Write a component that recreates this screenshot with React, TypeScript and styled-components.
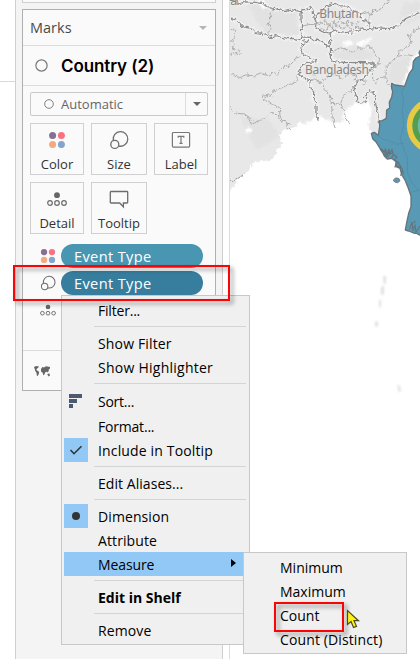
import React from "react";
import styled, { createGlobalStyle } from "styled-components";

const GlobalStyle = createGlobalStyle`
  * { box-sizing: border-box; }
  body { margin: 0; background: #fff; overflow: hidden; }
`;

const Page = styled.div`
  position: relative;
  display: flex;
  width: 420px;
  height: 659px;
  overflow: hidden;
  background: #fff;
  font-family: "Open Sans", "Noto Sans", sans-serif;
  color: #333;
`;
const Gutter = styled.div`
  flex: none;
  width: 15px;
  height: 82px;
  border-bottom: 1px solid #d9d9d9;
`;
const Sidebar = styled.aside`
  flex: none;
  display: flex;
  flex-direction: column;
  gap: 6px;
  width: 208px;
  padding: 0 6px;
  background: #f4f4f4;
  border-left: 1px solid #d0d0d0;
  border-right: 1px solid #d0d0d0;
`;
const PreviousCard = styled.div`
  height: 3px;
  background: #fafafa;
  border: 1px solid #d0d0d0;
  border-top: 0;
`;
const Card = styled.section`
  display: flex;
  flex-direction: column;
  height: 382px;
  background: #fafafa;
  border: 1px solid #b0b0b0;
`;
const CardHeader = styled.header`
  display: flex;
  align-items: center;
  justify-content: space-between;
  height: 36px;
  padding: 0 8px 0 7px;
  border-bottom: 1px solid #dcdcdc;
  font: 400 14.5px "Open Sans", sans-serif;
  color: #4a4a4a;
`;
const LayerTitle = styled.div`
  display: flex;
  align-items: center;
  gap: 13px;
  height: 40px;
  padding-left: 12px;
  border-bottom: 1px solid #dcdcdc;
  font: 600 17px Inter, sans-serif;
  letter-spacing: -0.1px;
  color: #000;
`;
const Caret = styled.span<{ $color: string; $size: number }>`
  border: ${(p) => p.$size}px solid transparent;
  border-top: ${(p) => p.$size}px solid ${(p) => p.$color};
  border-bottom: 0;
`;
const MarkType = styled.div`
  display: flex;
  height: 24px;
  margin: 6px 7px 0;
  border: 1px solid #c9c9c9;
  border-radius: 2px;
  font: 400 13px "Open Sans", sans-serif;
  color: #666;
`;
const MarkTypeValue = styled.div`
  flex: 1;
  display: flex;
  align-items: center;
  gap: 7px;
  padding-left: 13px;
`;
const MarkTypeArrow = styled.div`
  display: flex;
  align-items: center;
  justify-content: center;
  width: 22px;
  border-left: 1px solid #dcdcdc;
`;
const ButtonGrid = styled.div`
  display: grid;
  grid-template-columns: 54px 56px 54px;
  grid-auto-rows: 52px;
  column-gap: 7px;
  row-gap: 7px;
  margin: 7px 7px 0;
`;
const MarkButton = styled.button`
  display: flex;
  flex-direction: column;
  align-items: center;
  padding: 6px 0 0;
  background: #fafafa;
  border: 1px solid #d0d0d0;
  font: 400 13px/17px "Open Sans", sans-serif;
  color: #333;
  svg { flex: none; margin-bottom: 6px; }
`;
const Shelf = styled.div`
  display: flex;
  flex-direction: column;
  gap: 3px;
  height: 117px;
  padding: 10px 0 0 16px;
  border-bottom: 1px solid #dcdcdc;
`;
const ShelfRow = styled.div`
  display: flex;
  align-items: center;
  gap: 4px;
  height: 24px;
`;
const Pill = styled.span<{ $active?: boolean }>`
  width: 142px;
  height: 24px;
  padding-left: 13px;
  border-radius: 12px;
  background: ${(p) => (p.$active ? "#377e9e" : "#4996b2")};
  color: #fff;
  font: 500 14.6px/25px "Open Sans", sans-serif;
  letter-spacing: 0.35px;
`;
const CardFooter = styled.div`
  padding: 11px 0 0 10px;
`;
const MapPane = styled.main`
  margin-left: 6px;
  flex: 1;
  border-left: 1px solid #dcdcdc;
`;
const Menu = styled.div<{ $x: number; $y: number; $w: number; $h: number }>`
  position: absolute;
  left: ${(p) => p.$x}px;
  top: ${(p) => p.$y}px;
  width: ${(p) => p.$w}px;
  height: ${(p) => p.$h}px;
  padding: 2px 0 2px 2px;
  background: #f0f0f0;
  border: 1px solid #c8c8c8;
  font: 400 14px "Open Sans", sans-serif;
  color: #000;
`;
const Item = styled.div<{ $selected?: boolean; $bold?: boolean; $tall?: boolean; $spacing?: number }>`
  display: flex;
  align-items: center;
  gap: 10px;
  height: ${(p) => (p.$tall ? 26 : 24)}px;
  font-weight: ${(p) => (p.$bold ? 700 : 400)};
  letter-spacing: ${(p) => p.$spacing ?? 0}px;
  white-space: nowrap;
  background: ${(p) => (p.$selected ? "#91c8f6" : "transparent")};
`;
const Mark = styled.span<{ $on?: boolean }>`
  display: flex;
  align-items: center;
  justify-content: center;
  flex: none;
  width: 24px;
  height: 24px;
  background: ${(p) => (p.$on ? "#91c8f6" : "transparent")};
`;
const Arrow = styled.span`
  margin: -2px 13px 0 auto;
  border: 4px solid transparent;
  border-left: 5px solid #000;
  border-right: 0;
`;
const Separator = styled.hr`
  height: 1px;
  margin: 4px 3px 4px 30px;
  border: 0;
  background: #d4d4d4;
`;
const Highlight = styled.div<{ $x: number; $y: number; $w: number; $h: number }>`
  position: absolute;
  left: ${(p) => p.$x}px;
  top: ${(p) => p.$y}px;
  width: ${(p) => p.$w}px;
  height: ${(p) => p.$h}px;
  border: 2px solid #fa0505;
  filter: drop-shadow(3px 3px 2px rgba(0, 0, 0, 0.42));
`;
const Pointer = styled.svg`
  position: absolute;
  left: 346px;
  top: 609px;
`;

const Ring = ({ size }: { size: number }) => (
  <svg width={size} height={size} viewBox="0 0 12 12" fill="none" stroke="#777" strokeWidth="1.1">
    <circle cx="6" cy="6" r="5.2" />
  </svg>
);
const ColorIcon = ({ small }: { small?: boolean }) => (
  <svg width={small ? 18 : 20} height={small ? 18 : 20} viewBox="0 0 20 20">
    <circle cx="5.6" cy="5.6" r="3.5" fill="#866f96" />
    <circle cx="14.4" cy="5.6" r="3.5" fill="#fa7280" />
    <circle cx="5.6" cy="14.4" r="3.5" fill="#f5a97e" />
    <circle cx="14.4" cy="14.4" r="3.5" fill="#82a5cf" />
  </svg>
);
const SizeIcon = ({ small }: { small?: boolean }) => (
  <svg width={small ? 16 : 20} height={small ? 16 : 20} viewBox="0 0 20 20" fill="none" stroke="#6c6c6c" strokeWidth="1.3">
    <path d="M4.300 10.200A7.300 7.300 0 1 1 10 16.100" />
    <circle cx="5.8" cy="14.4" r="4" />
  </svg>
);
const IconSlot = styled.span`
  display: flex;
  justify-content: center;
  width: 18px;
`;
const LabelIcon = () => (
  <svg width="20" height="20" viewBox="0 0 20 20" fill="none" stroke="#777" strokeWidth="1.2">
    <rect x="1.4" y="2.5" width="17.2" height="14.6" rx="1" />
    <path d="M7.200 7.800V6.300h5.600V7.800M10 6.300v7M8.400 13.300h3.200" />
  </svg>
);
const DetailIcon = ({ small }: { small?: boolean }) => (
  <svg width={small ? 16 : 20} height={small ? 16 : 20} viewBox="0 0 20 20" fill="none" stroke="#6c6c6c" strokeWidth="1.2">
    <circle cx="10" cy="6.2" r="2.9" fill="#666" stroke="none" />
    <circle cx="3" cy="14" r="2.3" />
    <circle cx="10" cy="14" r="2.3" />
    <circle cx="17" cy="14" r="2.3" />
  </svg>
);
const TooltipIcon = () => (
  <svg width="20" height="20" viewBox="0 0 20 20" fill="none" stroke="#6c6c6c" strokeWidth="1.3">
    <path d="M2 2.500h16a.7.7 0 0 1 .7.7V13.300a.7.7 0 0 1-.7.7h-3.600v3.800l-3.700-3.800H2a.7.7 0 0 1-.7-.7V3.200A.7.7 0 0 1 2 2.500Z" />
  </svg>
);
const WorldIcon = () => (
  <svg width="18" height="14" viewBox="0 0 18 14" fill="#666">
    <path d="M1 2l2-1 3 .5-1 1.500-1 .4-.6 1.400 1 1 1.700 1-.2 2L4.700 11l-.8-.2-.4-3-1-1.200L1.700 4z" />
    <path d="M8 4l1.400-2L11 2.500l2-1.200 4 .8v1.500l-1.200.8-.3 2-1.500 1-.7-1-1 .8-.9 2.300-1.100.7-.6-2.500L8 6.500z" />
    <path d="M14.200 9l2.200-.4.6 1.800-1.500 1z" />
  </svg>
);
const SortIcon = () => (
  <svg width="14" height="14" viewBox="0 0 14 14" fill="#4b5a70">
    <path d="M0 0h13v4H0zM0 5h8v4H0zM0 10h4v4H0z" />
  </svg>
);
const CheckIcon = () => (
  <svg width="14" height="12" viewBox="0 0 14 12" fill="none" stroke="#333" strokeWidth="1.6">
    <path d="M1.500 6l3.500 3.700 7.500-7.500" />
  </svg>
);
const DotIcon = () => (
  <svg width="8" height="8" viewBox="0 0 8 8"><circle cx="4" cy="4" r="4" fill="#333" /></svg>
);

const MYANMAR =
  "M604 145L597 158 600 168 588 174 580 184 578 207 568 220 561 239 554 259 525 255 515 250 515 265 518 275 515 292 508 306 509 324 500 330 499 355 487 362 478 363 479 379 475 406 463 397 454 400 458 416 469 427 483 450 495 470 502 477 515 475 528 485 527 499 540 505 545 523 556 542 565 565 573 588 573 620 566 640 560 668 556 690 566 693 580 699 590 700 604 708Z";

const COUNTRY_BORDERS = [
  "M30 51L51 62 69 80 95 85 107 98 128 100 150 113 167 107 181 111 205 116 219 115 239 119 247 108 244 90 248 77 243 60 243 38 247 28 259 29 273 22 279 31 282 51 289 68 286 83 304 92 327 99 348 93 375 98 399 96 422 87 448 89 446 62 425 58 421 38 396 30 381 18 357 17 342 10 323 16 306 33 290 47 281 67",
  "M30 1L48 0 57 12 75 6 107 7 128 11 146 24 170 26 195 35 218 30 242 35",
  "M448 89L477 84 512 86 532 80 555 57 576 47 600 37",
  "M247 111L270 112 281 122 294 120 311 130 327 141 332 118",
  "M332 100L331 170 336 181 372 188 414 187 456 189 467 195 454 206 443 224 430 236 412 244 402 261 407 285 415 305 426 311 437 300 436 286 447 273 457 276 466 285 467 312 474 340 475 370",
  "M246 124L269 119 248 133 240 146 249 163 274 174 288 179 287 186 263 187 250 198 240 203 235 217 245 230 270 242 269 262 281 276 281 299 288 312 288 337 294 358",
];
const STATE_BORDERS = [
  "M163 25L150 40 152 58 144 73 151 84 143 99 151 106",
  "M246 79L266 73 285 74M285 77L299 66 310 72 317 62 325 76 340 60 347 77 358 62 374 72 389 60 397 73 415 67 426 60 445 68",
  "M302 69L301 84 321 91 327 76 343 91 356 78 372 90 381 76 397 92 410 79 428 85M355 62L366 51M387 62L376 84M343 60L337 88",
  "M32 87L47 92 40 105 47 115 33 121 42 133 38 145 59 151 64 159 30 163",
  "M30 225L43 224 56 234 80 225 103 228 119 218 144 227 158 219 175 223 190 201 213 194 227 174 245 170",
  "M245 217L232 225 230 242 211 252 184 263 161 274 156 284 133 288 129 297 158 314 178 322 181 358 198 368 202 380 213 389",
  "M30 322L43 339 74 342 86 351 92 370 130 358 151 339 172 345 185 362 211 373",
  "M332 162L342 151 361 143 382 149 395 157 414 143 431 146 444 135 458 147 461 161 480 177 473 194 457 204 458 238 469 250 475 237 496 229",
  "M281 224L294 242 308 253 311 264 331 287 334 311 337 336 340 358 344 383M275 241L319 237 329 220 351 225 371 240 380 219 410 225 405 245 416 237",
  "M334 310L361 312 374 281 392 274 399 261 410 258M358 312L373 331 377 362 390 371",
  "M600 85L581 92 567 111 574 126 558 145 534 155 532 169 518 180 499 199 498 235 503 253 514 260M532 169L563 164 580 168",
  "M421 42L438 35 449 42 459 33 484 28 494 13 509 3M445 60L455 42",
  "M437 286L447 270 456 277M415 249L426 237 437 246 428 255M457 206L470 199",
];

const MapDrawing = () => (
  <svg width="190" height="659" viewBox="30 0 570 1977">
    <defs>
      <filter id="ragged" x="-5%" y="-5%" width="110%" height="110%" colorInterpolationFilters="sRGB">
        <feTurbulence type="fractalNoise" baseFrequency="0.09" numOctaves="2" seed="9" />
        <feDisplacementMap in="SourceGraphic" scale="16" xChannelSelector="R" yChannelSelector="G" />
      </filter>
      <filter id="soft" x="-10%" y="-10%" width="120%" height="120%" colorInterpolationFilters="sRGB">
        <feGaussianBlur stdDeviation="3" />
      </filter>
    </defs>
    <g filter="url(#ragged)">
      <path fill="#e8e8e8" d="M10-20H630V350L480 410 455 403 445 378 440 342 427 332 411 340 399 358 365 369 336 374 308 366 275 383 246 366 226 380 204 390 185 393 180 410 188 430 176 449 153 479 128 485 104 485 92 501 65 527 43 559 10 585Z" />
      <g filter="url(#soft)" fill="#dedede" opacity=".55">
        <path d="M80 10l145 25 15 72-110-12zM340 155l80-15 45 25-30 22-90-5zM515 180l65-12-25 85-50-10zM60 350l90 10 30 50-70 40zM550 10l50-5v50l-70 30z" />
      </g>
      <g filter="url(#soft)" fill="none" stroke="#fafafa" strokeWidth="9">
        {COUNTRY_BORDERS.map((d) => <path key={d} d={d} />)}
      </g>
      <g filter="url(#soft)" fill="#fff">
        <path d="M365 135l20-16 14 8-8 10zM408 130l28-10 23-12-13 20-30 12zM410 308l20 10 14-22 12 28-10 55-80 0 5-45zM110 5l20-6 12 22-12 3zM75 390l12-9 8 10-10 10zM250 372l50-25 40 22 40-6-10 24H245z" />
        <path d="M555 260l50-105-12 0-20 25-10 35-14 30z" />
      </g>
      <g fill="none" stroke="#a8a8a8" strokeWidth="2.800">
        {STATE_BORDERS.map((d) => <path key={d} d={d} />)}
      </g>
      <g fill="none" stroke="#8c8c8c" strokeWidth="3.800">
        {COUNTRY_BORDERS.map((d) => <path key={d} d={d} />)}
      </g>
      <path fill="none" stroke="#999" strokeWidth="3" d="M30 541l15 1 12-9 14-9M286 330l9 34" />
    </g>
    <path d={MYANMAR} fill="#589ab6" stroke="#65747b" strokeWidth="4" strokeLinejoin="round" />
    <path fill="none" stroke="#4c89a5" strokeWidth="2" d="M554 260l-9 15 6 25-4 32 4 47-11 38 9 22 13 35 1 47 13 29 20 20M474 406l12 11 20 5 24 11 22-4M573 577l30-8" />
    <g fill="none" stroke="#65747b" strokeWidth="3.5">
      <path d="M480 447l8 8-4-9 10 12 2-12 5 18 6-17 2 15 7-13 3 12-15-3-11 9 11 2-6-9 15 2M513 476l8-12 10 7-8 8 12 10M524 502l10-16 11 19-18-10M542 528l5-18 4 12M569 688l7-22 3 24 6-14 3 20 12-18M581 670l4-8" />
    </g>
    <path d="M520 540l7-6 9 1 4 7-7 6-9-2z" fill="#589ab6" stroke="#777" strokeWidth="3" />
    <circle cx="645" cy="377" r="76" fill="#67bbb0" stroke="#eac943" strokeWidth="17" />
    <circle cx="645" cy="377" r="60" fill="none" stroke="#579e4c" strokeWidth="16" />
    <g filter="url(#soft)" fill="#dedede">
      <path d="M490 828h8l-1 25-6-2zM484 860l8-2-1 27-8-2zM477 903l7-5-2 22-5 3zM465 967l8-4 1 14-8 5zM532 1155l7 2 4 16-6 4z" />
    </g>
    <g fontFamily='"Noto Sans", sans-serif' fontSize="36" fill="#858585" stroke="#eeeeee" strokeWidth="2" paintOrder="stroke">
      <text x="31" y="15" textLength="25">al</text>
      <text x="298" y="54" textLength="118">Bhutan</text>
      <text x="255" y="222" textLength="192">Bangladesh</text>
    </g>
  </svg>
);

export default function App() {
  return (
    <Page>
      <GlobalStyle />
      <Gutter />
      <Sidebar>
        <PreviousCard />
        <Card>
          <CardHeader>Marks<Caret $color="#b5b5b5" $size={4} /></CardHeader>
          <LayerTitle><Ring size={13} />Country (2)</LayerTitle>
          <MarkType>
            <MarkTypeValue><Ring size={10} />Automatic</MarkTypeValue>
            <MarkTypeArrow><Caret $color="#666" $size={4} /></MarkTypeArrow>
          </MarkType>
          <ButtonGrid>
            <MarkButton><ColorIcon />Color</MarkButton>
            <MarkButton><SizeIcon />Size</MarkButton>
            <MarkButton><LabelIcon />Label</MarkButton>
            <MarkButton><DetailIcon />Detail</MarkButton>
            <MarkButton><TooltipIcon />Tooltip</MarkButton>
          </ButtonGrid>
          <Shelf>
            <ShelfRow><IconSlot><ColorIcon small /></IconSlot><Pill>Event Type</Pill></ShelfRow>
            <ShelfRow><IconSlot><SizeIcon small /></IconSlot><Pill $active>Event Type</Pill></ShelfRow>
            <ShelfRow><IconSlot><DetailIcon small /></IconSlot></ShelfRow>
          </Shelf>
          <CardFooter><WorldIcon /></CardFooter>
        </Card>
      </Sidebar>
      <MapPane><MapDrawing /></MapPane>

      <Menu $x={61} $y={295} $w={189} $h={350}>
        <Item $spacing={-0.2}><Mark />Filter...</Item>
        <Separator />
        <Item $spacing={0.15}><Mark />Show Filter</Item>
        <Item $spacing={0.25}><Mark />Show Highlighter</Item>
        <Separator />
        <Item $tall $spacing={-0.25}><Mark><SortIcon /></Mark>Sort...</Item>
        <Item $spacing={-0.2}><Mark />Format...</Item>
        <Item $spacing={0.15}><Mark $on><CheckIcon /></Mark>Include in Tooltip</Item>
        <Separator />
        <Item $spacing={0.05}><Mark />Edit Aliases...</Item>
        <Separator />
        <Item $spacing={0.1}><Mark $on><DotIcon /></Mark>Dimension</Item>
        <Item $spacing={0.1}><Mark />Attribute</Item>
        <Item $selected $spacing={-0.1}><Mark />Measure<Arrow /></Item>
        <Separator />
        <Item $bold><Mark />Edit in Shelf</Item>
        <Separator />
        <Item $spacing={0.1}><Mark />Remove</Item>
      </Menu>
      <Highlight $x={13} $y={265} $w={217} $h={36} />
      <Menu $x={243} $y={552} $w={164} $h={102}>
        <Item><Mark />Minimum</Item>
        <Item><Mark />Maximum</Item>
        <Item><Mark />Count</Item>
        <Item $spacing={0.12}><Mark />Count (Distinct)</Item>
      </Menu>
      <Highlight $x={274} $y={602} $w={70} $h={30} />
      <Pointer width="15" height="20" viewBox="0 0 15 20">
        <path d="M1.500 1.500v14l3.500-3 2.500 6 3-1.200-2.500-5.600h4.500z" fill="#fff21a" stroke="#4a4a20" strokeWidth="1.200" />
      </Pointer>
    </Page>
  );
}
